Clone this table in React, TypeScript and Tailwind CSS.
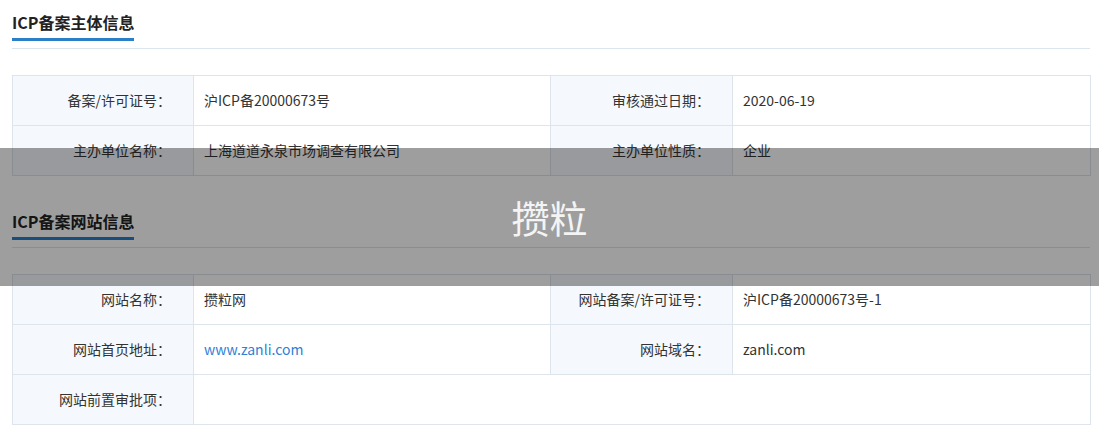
const subject = [
  [
    { label: "备案/许可证号：", value: "沪ICP备20000673号" },
    { label: "审核通过日期：", value: "2020-06-19" },
  ],
  [
    { label: "主办单位名称：", value: "上海道道永泉市场调查有限公司" },
    { label: "主办单位性质：", value: "企业" },
  ],
];

const site = [
  [
    { label: "网站名称：", value: "攒粒网" },
    { label: "网站备案/许可证号：", value: "沪ICP备20000673号-1" },
  ],
  [
    { label: "网站首页地址：", value: "www.zanli.com", link: true },
    { label: "网站域名：", value: "zanli.com" },
  ],
];

type Cell = { label: string; value: string; link?: boolean };

function Title({ text }: { text: string }) {
  return (
    <div className="pl-3 pr-[9px]">
      <div className="pt-[11px]">
        <span className="inline-block border-b-[3px] border-[#2a7fc6] pb-[5px] text-[16px] leading-[22px] font-bold text-[#222]">
          {text}
        </span>
      </div>
      <div className="mt-[7px] h-px bg-[#dbe5ee]" />
    </div>
  );
}

function Row({ cells }: { cells: Cell[] }) {
  return (
    <div className="flex h-[50px] border-b border-[#dde4ec]">
      {cells.map((c, i) => (
        <div key={i} className={`flex ${i === 0 ? "w-[537px]" : "flex-1"}`}>
          <div className={`flex shrink-0 items-center justify-end bg-[#f5f9fd] pr-[22px] border-r border-[#dde4ec] ${i === 1 ? "w-[183px] border-l" : "w-[181px]"}`}>
            {c.label}
          </div>
          <div className={`flex flex-1 items-center pl-[10px] ${c.link ? "text-[#2f7fd6]" : ""}`}>
            {c.value}
          </div>
        </div>
      ))}
    </div>
  );
}

export default function App() {
  return (
    <div className="relative h-[435px] w-[1099px] overflow-hidden bg-white text-[14px] text-[#333] font-['Microsoft_YaHei','Noto_Sans_CJK_SC',sans-serif]">
      <Title text="ICP备案主体信息" />
      <div className="mx-3 mt-[26px] w-[1079px] border border-b-0 border-[#dde4ec]">
        {subject.map((r, i) => (
          <Row key={i} cells={r} />
        ))}
      </div>

      <div className="mt-[23px]">
        <Title text="ICP备案网站信息" />
      </div>
      <div className="mx-3 mt-[26px] w-[1079px] border border-b-0 border-[#dde4ec]">
        {site.map((r, i) => (
          <Row key={i} cells={r} />
        ))}
        <div className="flex h-[50px] border-b border-[#dde4ec]">
          <div className="flex w-[181px] shrink-0 items-center justify-end bg-[#f5f9fd] pr-[22px] border-r border-[#dde4ec]">
            网站前置审批项：
          </div>
          <div className="flex-1" />
        </div>
      </div>

      {/* watermark band */}
      <div className="absolute left-0 right-0 top-[148px] flex h-[138px] items-center justify-center bg-[rgba(0,0,0,0.38)]">
        <span className="text-[38px] leading-none text-[#f4f4f4]">攒粒</span>
      </div>
    </div>
  );
}
